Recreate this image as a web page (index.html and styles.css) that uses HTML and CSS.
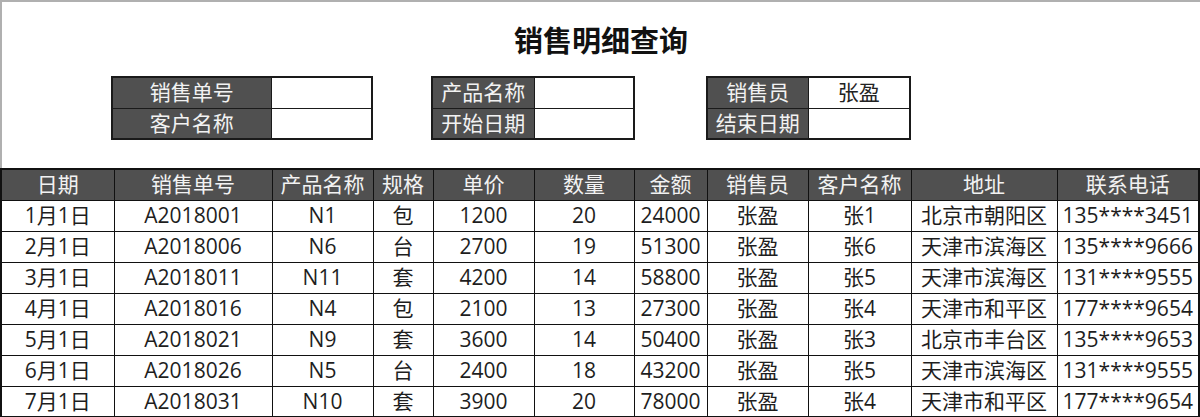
FILE: index.html
```html
<!DOCTYPE html>
<html lang="zh-CN">
<head>
<meta charset="utf-8">
<title>销售明细查询</title>
<link rel="stylesheet" href="styles.css">
</head>
<body>
<div class="sheet">
  <div class="top">
    <h1 class="title">销售明细查询</h1>
    <div class="form">
      <table class="fblock b1">
        <tr><td class="lab">销售单号</td><td class="val"></td></tr>
        <tr><td class="lab">客户名称</td><td class="val"></td></tr>
      </table>
      <table class="fblock b2">
        <tr><td class="lab">产品名称</td><td class="val"></td></tr>
        <tr><td class="lab">开始日期</td><td class="val"></td></tr>
      </table>
      <table class="fblock b3">
        <tr><td class="lab">销售员</td><td class="val">张盈</td></tr>
        <tr><td class="lab">结束日期</td><td class="val"></td></tr>
      </table>
    </div>
  </div>
  <table class="data">
    <colgroup>
      <col class="c1"><col class="c2"><col class="c3"><col class="c4"><col class="c5"><col class="c6"><col class="c7"><col class="c8"><col class="c9"><col class="c10"><col class="c11">
    </colgroup>
    <thead>
      <tr><th>日期</th><th>销售单号</th><th>产品名称</th><th>规格</th><th>单价</th><th>数量</th><th>金额</th><th>销售员</th><th>客户名称</th><th>地址</th><th>联系电话</th></tr>
    </thead>
    <tbody>
      <tr><td>1月1日</td><td>A2018001</td><td>N1</td><td>包</td><td>1200</td><td>20</td><td>24000</td><td>张盈</td><td>张1</td><td>北京市朝阳区</td><td>135****3451</td></tr>
      <tr><td>2月1日</td><td>A2018006</td><td>N6</td><td>台</td><td>2700</td><td>19</td><td>51300</td><td>张盈</td><td>张6</td><td>天津市滨海区</td><td>135****9666</td></tr>
      <tr><td>3月1日</td><td>A2018011</td><td>N11</td><td>套</td><td>4200</td><td>14</td><td>58800</td><td>张盈</td><td>张5</td><td>天津市滨海区</td><td>131****9555</td></tr>
      <tr><td>4月1日</td><td>A2018016</td><td>N4</td><td>包</td><td>2100</td><td>13</td><td>27300</td><td>张盈</td><td>张4</td><td>天津市和平区</td><td>177****9654</td></tr>
      <tr><td>5月1日</td><td>A2018021</td><td>N9</td><td>套</td><td>3600</td><td>14</td><td>50400</td><td>张盈</td><td>张3</td><td>北京市丰台区</td><td>135****9653</td></tr>
      <tr><td>6月1日</td><td>A2018026</td><td>N5</td><td>台</td><td>2400</td><td>18</td><td>43200</td><td>张盈</td><td>张5</td><td>天津市滨海区</td><td>131****9555</td></tr>
      <tr><td>7月1日</td><td>A2018031</td><td>N10</td><td>套</td><td>3900</td><td>20</td><td>78000</td><td>张盈</td><td>张4</td><td>天津市和平区</td><td>177****9654</td></tr>
    </tbody>
  </table>
</div>
</body>
</html>
```

FILE: styles.css
```css
* { box-sizing: border-box; }
html, body {
  margin: 0;
  padding: 0;
  background: #fff;
}
body {
  font-family: "Open Sans", "Noto Sans CJK SC", sans-serif;
  color: #1e1e1e;
  width: 1200px;
  height: 417px;
  overflow: hidden;
}
.sheet {
  width: 1200px;
}
.top {
  height: 168px;
  border-top: 2px solid #b0b0b0;
  border-left: 2px solid #b0b0b0;
}
.title {
  margin: 0;
  height: 74px;
  line-height: 74px;
  text-align: center;
  font-size: 29px;
  font-weight: 700;
  color: #111;
  font-family: "Noto Sans CJK SC", sans-serif;
}
.form {
  display: flex;
  padding-left: 109px;
}
.fblock {
  border-collapse: collapse;
  table-layout: fixed;
  border: 2px solid #1a1a1a;
}
.fblock td {
  height: 31px;
  padding: 0;
  border: 1px solid #1a1a1a;
  font-size: 21px;
  line-height: 29px;
  text-align: center;
  white-space: nowrap;
  overflow: hidden;
}
.fblock .lab {
  background: #505050;
  color: #f2f2f2;
}
.fblock .val {
  background: #fff;
  color: #222;
}
.b1 { width: 262px; }
.b1 .lab { width: 159px; }
.b2 { width: 204px; margin-left: 58px; }
.b2 .lab { width: 102px; }
.b3 { width: 205px; margin-left: 71px; }
.b3 .lab { width: 101px; }

.data {
  border-collapse: collapse;
  table-layout: fixed;
  width: 1198px;
  border: 2px solid #111;
}
.c1 { width: 113px; }
.c2 { width: 158px; }
.c3 { width: 101px; }
.c4 { width: 60px; }
.c5 { width: 101px; }
.c6 { width: 100px; }
.c7 { width: 73px; }
.c8 { width: 101px; }
.c9 { width: 103px; }
.c10 { width: 146px; }
.c11 { width: 142px; }
.data th, .data td {
  height: 31px;
  padding: 0;
  border: 1px solid #111;
  font-size: 21px;
  line-height: 29px;
  text-align: center;
  white-space: nowrap;
  overflow: hidden;
}
.data th {
  background: #505050;
  color: #f2f2f2;
  font-weight: 400;
}
.data td {
  color: #1e1e1e;
}
```
